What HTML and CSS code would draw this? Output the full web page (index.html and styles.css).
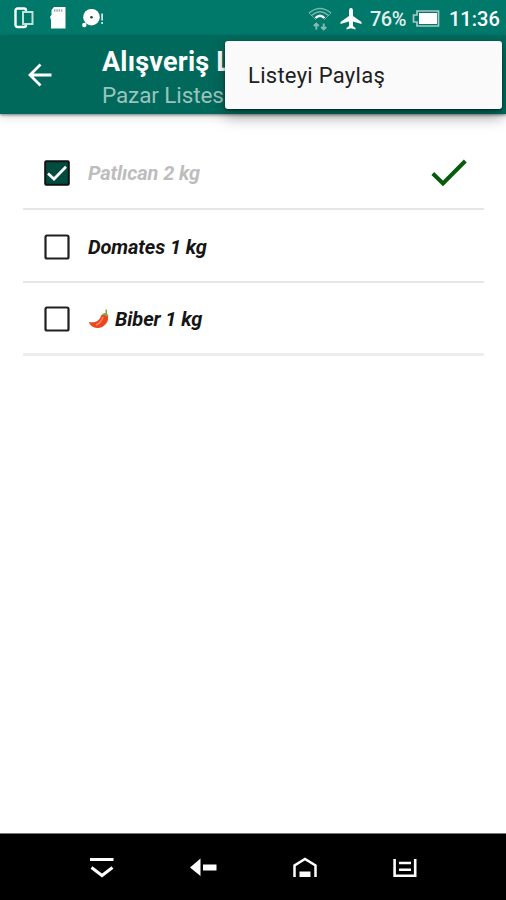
FILE: index.html
```html
<!DOCTYPE html>
<html lang="tr">
<head>
<meta charset="utf-8">
<title>Alışveriş Listesi</title>
<link rel="stylesheet" href="styles.css">
</head>
<body>
<div class="screen">
  <header class="status">
    <div class="notices">
      <svg class="icon-cards" width="21" height="22" viewBox="0 0 21 22" fill="none"><rect x="1.5" y="1.5" width="10.5" height="18.5" rx="2" stroke="#fff" stroke-width="2.4"/><path d="M9 5H18.5V17H9Z" fill="#00796b" stroke="#bce2dc" stroke-width="2"/></svg>
      <svg class="icon-sd" width="16" height="22" viewBox="0 0 16 22"><path d="M4 0H15.5V21.5H1V13L0 10L1.5 8V3Z" fill="#fff"/><path d="M4 3.5H13" stroke="#9db3b0" stroke-width="2.5" stroke-dasharray="1.5 .8"/></svg>
      <svg class="icon-disc" width="22" height="20" viewBox="0 0 22 20" fill="#fff"><circle cx="9.5" cy="8.2" r="8.3"/><circle cx="2.3" cy="16" r="2.2"/><circle cx="9.5" cy="8.2" r="1.3" fill="#174d45"/><path d="M19.2 4.5H21V11.5H19.2ZM19.2 13H21V15H19.2Z" opacity=".8"/></svg>
    </div>
    <div class="system">
      <svg class="icon-wifi" width="24" height="24" viewBox="0 0 24 24" fill="none" stroke="#fff"><path d="M1 6Q12-3 23 6M3.5 8.5Q12 1 20.5 8.5" stroke-width="1.3" opacity=".45"/><path d="M1 6L8 13M16 13L23 6" stroke-width="1" opacity=".35"/><path d="M7.5 11Q12 6.5 16.5 11" stroke-width="2.2"/><path d="M8.3 22.5V16.5M5.8 19L8.3 16.5L10.8 19M15.7 16.5V22.5M13.2 20L15.7 22.5L18.2 20" stroke-width="1.9" opacity=".5"/></svg>
      <svg class="icon-plane" width="22" height="22" viewBox="0 0 22 22"><path d="M11 0Q13 0 13 3V8L21.5 14V16L13 13.5V18L15.5 20V21.5L11 20.2L6.5 21.5V20L9 18V13.5L.5 16V14L9 8V3Q9 0 11 0Z" fill="#fff"/></svg>
      <span class="percent">76%</span>
      <svg class="icon-battery" width="28" height="17" viewBox="0 0 28 17" fill="none"><path d="M5 1H26.5V16H5V12H1.5V5H5Z" stroke="#a9c9c4" stroke-width="1.7"/><rect x="7" y="3" width="18" height="11" fill="#fff"/></svg>
      <span class="time">11:36</span>
    </div>
  </header>
  <div class="appbar">
    <svg class="back" width="24" height="24" viewBox="0 0 24 24" fill="none" stroke="#fff" stroke-width="2.8"><path d="M12.5 1.5L2 12L12.5 22.5M2 12H23.5"/></svg>
    <div class="headings">
      <h1>Alışveriş L</h1>
      <p>Pazar Listes</p>
    </div>
    <div class="menu"><span>Listeyi Paylaş</span></div>
  </div>
  <main class="list">
    <div class="row done">
      <svg class="box" width="26" height="26" viewBox="0 0 26 26"><rect x="1.2" y="1.2" width="23.6" height="23.6" rx="1" fill="#004d40" stroke="#111" stroke-width="2"/><path d="M4 13.5L10 19L22 6.8" fill="none" stroke="#fff" stroke-width="2.7"/></svg>
      <span class="label">Patlıcan 2 kg</span>
      <svg class="tick" width="36" height="28" viewBox="0 0 36 28" fill="none" stroke="#065c0b" stroke-width="4"><path d="M1.8 14.5L12 24.5L34.3 2"/></svg>
    </div>
    <div class="row">
      <svg class="box" width="26" height="26" viewBox="0 0 26 26"><rect x="1.5" y="1.5" width="23" height="23" rx="1.5" fill="#fff" stroke="#202020" stroke-width="2.2"/></svg>
      <span class="label">Domates 1 kg</span>
    </div>
    <div class="row last">
      <svg class="box" width="26" height="26" viewBox="0 0 26 26"><rect x="1.5" y="1.5" width="23" height="23" rx="1.5" fill="#fff" stroke="#202020" stroke-width="2.2"/></svg>
      <svg class="pepper" width="22" height="20" viewBox="0 0 22 20"><path d="M13 6.5C12 11 8 14.5 1.5 13C0 14 4 19.5 10.5 19C17.5 18 21 12 20 7.5Q17 3.5 13 6.5Z" fill="#f0441c"/><path d="M15 8Q13.5 13.5 8 16" fill="none" stroke="#ff8a65" stroke-width="1.5"/><path d="M14 6Q15 3.5 17.5 4L17.5 .5L19 .5L19 4.5Q21 6 20.3 8L17.5 6.5Z" fill="#80ad45"/></svg>
      <span class="label">Biber 1 kg</span>
    </div>
  </main>
  <nav class="navbar">
    <svg width="24" height="22" viewBox="0 0 24 22" fill="none" stroke="#fff"><path d="M0 2.5H23.5" stroke-width="3"/><path d="M1.5 10.5L12 18.5L22.5 10.5" stroke-width="3"/></svg>
    <svg width="27" height="22" viewBox="0 0 27 22" fill="#fff"><path d="M0 10.5L10.5 1.5V19ZM13 7.5H26.5V13.5H13Z"/></svg>
    <svg width="24" height="22" viewBox="0 0 24 22"><path d="M1.5 20V8.5L12 2L22.5 8.5V20" fill="none" stroke="#fff" stroke-width="2.5"/><path d="M6.5 14.5H17.5V20H6.5Z" fill="#fff"/></svg>
    <svg width="24" height="22" viewBox="0 0 24 22" fill="none" stroke="#fff" stroke-width="2.6"><path d="M1.6 2V18.7H22.2V2M6 6H18M6 12.7H18"/></svg>
  </nav>
</div>
</body>
</html>
```
FILE: styles.css
```css
* { box-sizing: border-box; }
body { margin: 0; font-family: Roboto, sans-serif; }
h1, p { margin: 0; }
svg { display: block; flex: none; }
.screen { width: 506px; height: 900px; display: flex; flex-direction: column; background: #fff; overflow: hidden; }
.status { height: 36px; background: #00796b; display: flex; justify-content: space-between; color: #fff; padding: 0 7px 0 14px; flex: none; }
.notices, .system { display: flex; align-items: flex-start; }
.notices { padding-top: 7px; }
.icon-sd { margin-left: 15px; }
.icon-disc { margin: 2px 0 0 16px; }
.system { align-items: center; padding-top: 1px; }
.icon-wifi { margin-right: 1px; }
.icon-plane { margin-left: 7px; }
.percent { width: 37px; margin-left: 8px; font-size: 20px; letter-spacing: -.5px; font-weight: 500; opacity: .88; }
.icon-battery { margin-left: 5px; }
.time { width: 50px; margin-left: 9px; font-size: 20px; font-weight: 500; white-space: nowrap; }
.appbar { position: relative; height: 78px; flex: none; background: #00695c; display: flex; padding-left: 28px; box-shadow: 0 1px 3px rgba(0,0,0,.5), 0 4px 10px rgba(0,0,0,.1); }
.back { margin-top: 27px; }
.headings { width: 123px; margin-left: 50px; padding-top: 10px; white-space: nowrap; }
.headings h1 { color: #fff; font-size: 27px; letter-spacing: .2px; line-height: 32px; font-weight: 700; }
.headings p { color: #9bc3be; font-size: 22.5px; letter-spacing: -.1px; line-height: 28px; margin-top: 3px; }
.menu { position: absolute; left: 225px; top: 5px; width: 277px; height: 68px; display: flex; align-items: center; padding-left: 23px; border-radius: 3px; background: #fafafa; color: #202020; font-size: 22px; letter-spacing: .28px; white-space: nowrap; box-shadow: 0 1px 3px rgba(0,0,0,.5), 0 8px 16px rgba(0,0,0,.28); }
.list { flex: 1; padding: 22.6px 22px 0 23px; }
.row { display: flex; align-items: center; height: 73.3px; padding: 2px 17px 0 21px; border-bottom: 2px solid #e6e6e6; }
.row.last { border-bottom: 3px solid #ededed; }
.label { margin-left: 18px; font-size: 20px; letter-spacing: -.1px; font-weight: 700; font-style: italic; color: #151515; white-space: nowrap; }
.done .label { color: #bdbdbd; }
.tick { margin-left: auto; }
.pepper { margin-left: 18px; }
.pepper + .label { margin-left: 5px; }
.navbar { height: 67px; flex: none; background: #000; border-top: 1px solid #777; display: flex; align-items: center; padding: 1px 89px 0 90px; justify-content: space-between; }
```
